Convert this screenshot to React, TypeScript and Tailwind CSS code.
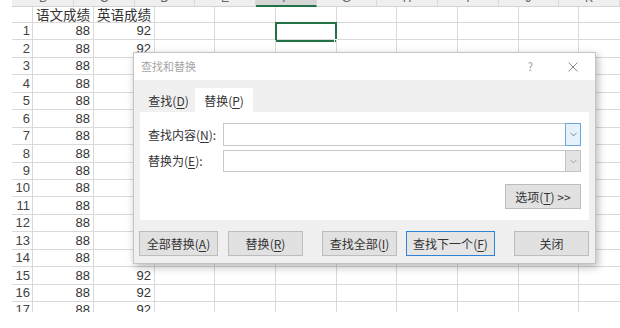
import { ChevronDown } from "lucide-react";

const cjk = { fontFamily: '"Noto Sans CJK SC", "Liberation Sans", sans-serif' };

const colW = [
  "w-[61px]",
  "w-[61px]",
  "w-[60px]",
  "w-[61px]",
  "w-[61px]",
  "w-[60px]",
  "w-[61px]",
  "w-[61px]",
  "w-[60px]",
  "w-[61px]",
];
const letters = ["B", "C", "D", "E", "F", "G", "H", "I", "J", "K"];
const rows = Array.from({ length: 17 }, (_, i) => i + 1);

function Key({ k }: { k: string }) {
  return (
    <>
      (<span className="underline underline-offset-2">{k}</span>)
    </>
  );
}

function Btn({ w, children, primary }: { w: string; children: React.ReactNode; primary?: boolean }) {
  return (
    <div
      className={
        "h-[25px] flex items-center justify-center text-[12px] text-[#333] " +
        w +
        (primary ? " bg-[#e5e5e5] border border-[#2f83d6]" : " bg-[#e1e1e1] border border-[#bdbdbd]")
      }
    >
      {children}
    </div>
  );
}

function Sheet() {
  return (
    <div className="h-[312px] overflow-hidden" style={{ fontFamily: '"Liberation Sans", "Noto Sans CJK SC", sans-serif' }}>
      {/* column letters, mostly scrolled out of view */}
      <div className="flex h-[7px] pl-[12px]">
        <div className="w-[21px] bg-[#efefef] border-b border-[#d4d4d4]" />
        {letters.map((l, i) => (
          <div
            key={l}
            className={
              colW[i] +
              " shrink-0 h-[7px] overflow-hidden flex justify-center border-r border-[#d9d9d9] " +
              (l === "F" ? "bg-[#d6d6d6] border-b-2 border-b-[#217346]" : "bg-[#efefef] border-b border-b-[#d4d4d4]")
            }
          >
            <span className="text-[12px] leading-[14px] -mt-[9px] text-[#666]">{l}</span>
          </div>
        ))}
      </div>
      {/* field names */}
      <div className="flex h-[16px] pl-[12px] text-[13.5px] text-[#333]" style={cjk}>
        <div className="w-[21px] shrink-0 border-r border-b border-[#d9d9d9]" />
        <div className={colW[0] + " shrink-0 border-r border-b border-[#d9d9d9] flex items-center justify-center leading-none"}>语文成绩</div>
        <div className={colW[1] + " shrink-0 border-r border-b border-[#d9d9d9] flex items-center justify-center leading-none"}>英语成绩</div>
        {colW.slice(2).map((w, i) => (
          <div key={i} className={w + " shrink-0 border-r border-b border-[#d9d9d9]"} />
        ))}
      </div>
      {rows.map((r) => (
        <div key={r} className="flex h-[17.45px] pl-[12px] text-[13px] text-[#333]">
          <div className="w-[21px] shrink-0 border-r border-b border-[#d9d9d9] flex items-center justify-end pr-[2px] text-[#444]">
            {r}
          </div>
          <div className={colW[0] + " shrink-0 border-r border-b border-[#d9d9d9] flex items-center justify-end pr-[3px]"}>88</div>
          <div className={colW[1] + " shrink-0 border-r border-b border-[#d9d9d9] flex items-center justify-end pr-[3px]"}>92</div>
          {colW.slice(2).map((w, i) => (
            <div key={i} className={w + " shrink-0 border-r border-b border-[#d9d9d9] relative"}>
              {r === 1 && i === 2 && (
                <div className="absolute -left-[1px] -top-[1px] w-[62px] h-[19.5px] border-2 border-[#217346]">
                  <div className="absolute -right-[3px] -bottom-[3px] w-[4px] h-[4px] bg-[#217346] border border-white" />
                </div>
              )}
            </div>
          ))}
        </div>
      ))}
    </div>
  );
}

function Dialog() {
  return (
    <div
      className="absolute left-[133px] top-[52px] w-[463px] h-[212px] flex flex-col border border-[#c4c4c4] shadow-[2px_3px_8px_rgba(0,0,0,0.28)] text-[#333]"
      style={cjk}
    >
      <div className="h-[27px] bg-white flex items-center pl-[7px] shrink-0">
        <span className="text-[11px] text-[#a6a6a6]">查找和替换</span>
        <div className="ml-auto flex items-center gap-[35px] pr-[17px]">
          <span className="text-[11px] text-[#9a9a9a]">?</span>
          <svg width="10" height="10" viewBox="0 0 10 10" className="text-[#8a8a8a]">
            <path d="M0.5 0.5 L9.5 9.5 M9.5 0.5 L0.5 9.5" stroke="currentColor" strokeWidth="1" fill="none" />
          </svg>
        </div>
      </div>
      <div className="flex-1 bg-[#f0f0f0] px-[6px] pt-[8px] flex flex-col">
        <div className="flex h-[24px] pl-[2px] text-[12px]">
          <div className="w-[53px] flex items-center justify-center pt-[2px]">
            查找<Key k="D" />
          </div>
          <div className="w-[58px] bg-white flex items-center justify-center pt-[2px]">
            替换<Key k="P" />
          </div>
        </div>
        <div className="h-[108px] bg-white pt-[11px] px-[8px] flex flex-col text-[12px]">
          <div className="flex items-center h-[23px]">
            <div className="w-[75px] shrink-0">
              查找内容<Key k="N" />:
            </div>
            <div className="flex-1 h-[23px] border border-[#c8c8c8] flex justify-end">
              <div className="w-[16px] -my-px -mr-px bg-[#e5f1fb] border border-[#6aa6e0] flex items-center justify-center">
                <ChevronDown size={11} strokeWidth={1.6} className="text-[#666]" />
              </div>
            </div>
          </div>
          <div className="flex items-center h-[22px] mt-[4px]">
            <div className="w-[75px] shrink-0">
              替换为<Key k="E" />:
            </div>
            <div className="flex-1 h-[22px] border border-[#c8c8c8] flex justify-end">
              <div className="w-[16px] -my-px -mr-px bg-[#e3e3e3] border border-[#c3c3c3] flex items-center justify-center">
                <ChevronDown size={11} strokeWidth={1.6} className="text-[#888]" />
              </div>
            </div>
          </div>
          <div className="flex justify-end mt-[12px]">
            <Btn w="w-[76px]">
              选项<Key k="T" />&nbsp;&gt;&gt;
            </Btn>
          </div>
        </div>
        <div className="flex mt-[11px] -ml-[1px]">
          <Btn w="w-[80px]">
            全部替换<Key k="A" />
          </Btn>
          <div className="ml-[10px]">
            <Btn w="w-[75px]">
              替换<Key k="R" />
            </Btn>
          </div>
          <div className="ml-[19px]">
            <Btn w="w-[75px]">
              查找全部<Key k="I" />
            </Btn>
          </div>
          <div className="ml-[9px]">
            <Btn w="w-[89px]" primary>
              查找下一个<Key k="F" />
            </Btn>
          </div>
          <div className="ml-[19px]">
            <Btn w="w-[75px]">关闭</Btn>
          </div>
        </div>
      </div>
    </div>
  );
}

export default function App() {
  return (
    <div className="w-[620px] h-[328px] bg-white relative overflow-hidden">
      <Sheet />
      <Dialog />
    </div>
  );
}
